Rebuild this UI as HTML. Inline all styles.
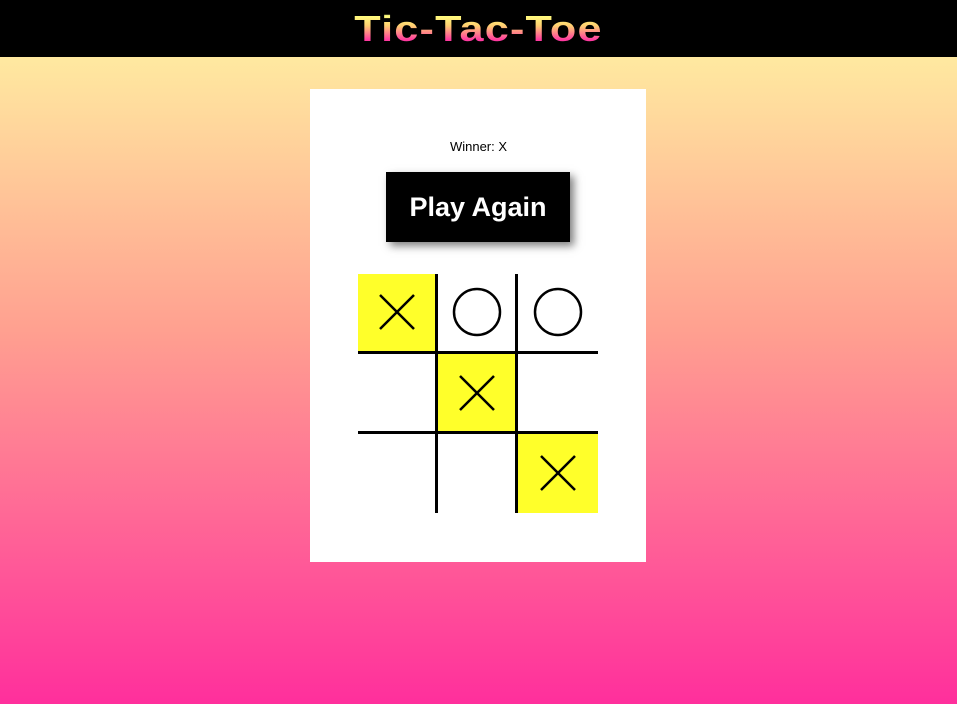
<!DOCTYPE html>
<html><head><style>
body{margin:0;width:957px;height:704px;overflow:hidden;position:relative;font-family:"Liberation Mono",monospace;background:linear-gradient(#ffe9a0 57px,#ffa090 330px,#ff2f9c 704px);}
.top{position:absolute;left:0;top:0;width:957px;height:57px;background:#000;text-align:center}
.title{font:900 36px/57px "Liberation Sans",sans-serif;letter-spacing:1px;background:linear-gradient(#000 25%,#ffff80 27%,#ffd070 45%,#ff3aa0 70%);-webkit-background-clip:text;color:transparent;display:inline-block;transform:scaleX(1.2)}
.card{position:absolute;left:310px;top:89px;width:336px;height:473px;background:#fff}
.win{position:absolute;left:0;width:957px;top:139px;text-align:center;font:13px "Liberation Sans",sans-serif;color:#000}
.btn{position:absolute;left:386px;top:172px;width:184px;height:70px;background:#000;color:#fff;font:bold 27px/70px "Liberation Sans",sans-serif;text-align:center;box-shadow:4px 4px 8px rgba(0,0,0,.5)}
.y{position:absolute;background:#ffff2a}
.l{position:absolute;background:#000}
</style></head><body>
<div class="top"><span class="title">Tic-Tac-Toe</span></div>
<div class="card"></div>
<div class="win">Winner: X</div>
<div class="btn">Play Again</div>
<div class="y" style="left:358px;top:274px;width:78px;height:78px"></div>
<div class="y" style="left:437px;top:353px;width:79px;height:79px"></div>
<div class="y" style="left:517px;top:433px;width:81px;height:80px"></div>
<div class="l" style="left:435px;top:274px;width:3px;height:239px"></div>
<div class="l" style="left:515px;top:274px;width:3px;height:239px"></div>
<div class="l" style="left:358px;top:351px;width:240px;height:3px"></div>
<div class="l" style="left:358px;top:431px;width:240px;height:3px"></div>
<svg style="position:absolute;left:0;top:0" width="957" height="704" fill="none" stroke="#000" stroke-width="2.5">
<path d="M380 295L414 329M414 295L380 329"/>
<path d="M460 376L494 410M494 376L460 410"/>
<path d="M541 456L575 490M575 456L541 490"/>
<circle cx="477" cy="312" r="23"/>
<circle cx="558" cy="312" r="23"/>
</svg>
</body></html>
